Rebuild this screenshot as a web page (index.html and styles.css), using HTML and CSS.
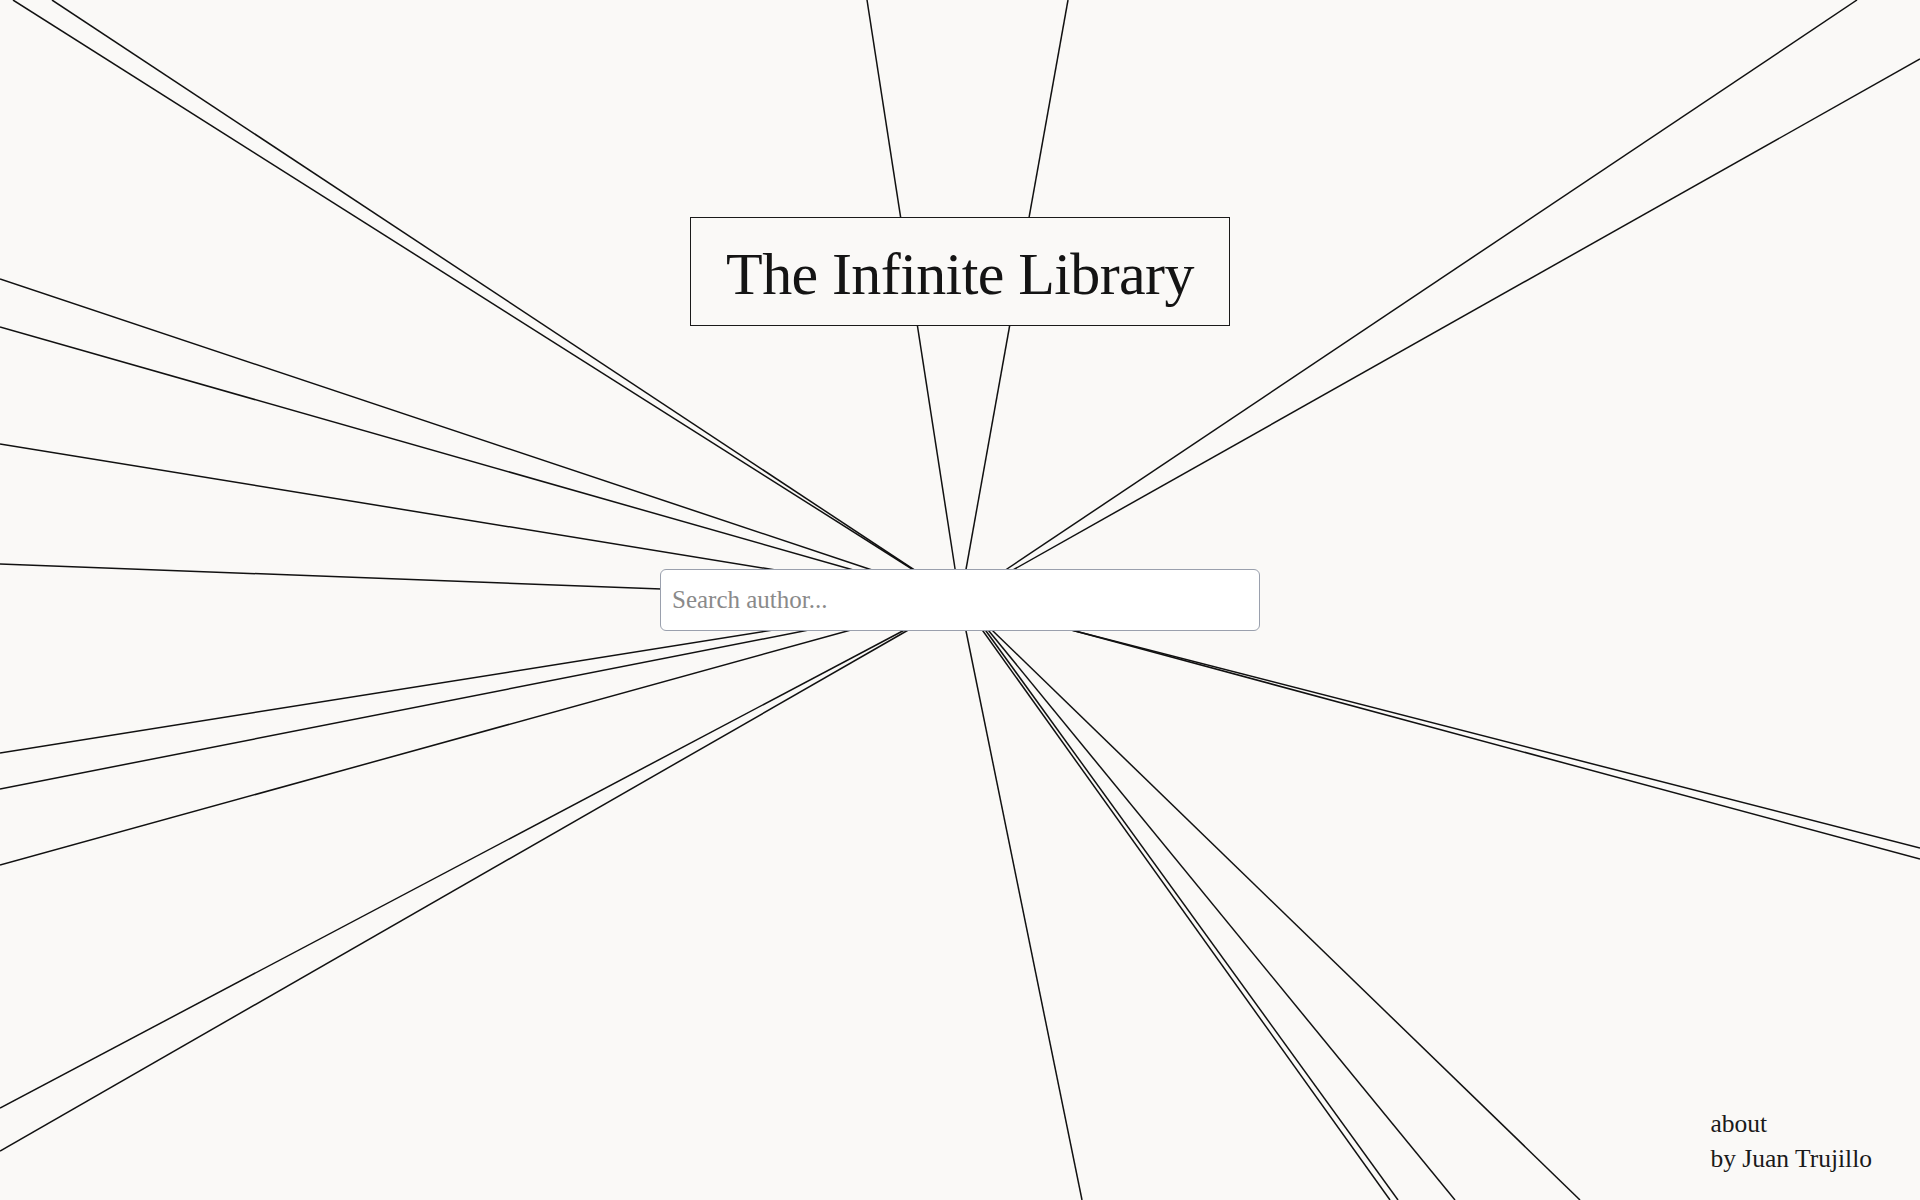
FILE: index.html
```html
<!DOCTYPE html>
<html lang="en">
<head>
<meta charset="utf-8">
<title>The Infinite Library</title>
<link rel="stylesheet" href="styles.css">
</head>
<body>
<svg class="web" viewBox="0 0 1920 1200" preserveAspectRatio="none" aria-hidden="true">
  <g class="links">
    <line x1="13" y1="0" x2="921.5" y2="575"/>
    <line x1="52" y1="0" x2="922" y2="575"/>
    <line x1="0" y1="279" x2="887" y2="575"/>
    <line x1="0" y1="327" x2="871" y2="575"/>
    <line x1="0" y1="444" x2="806" y2="575"/>
    <line x1="0" y1="564" x2="668" y2="589.3"/>
    <line x1="867" y1="0" x2="956" y2="575"/>
    <line x1="1068" y1="0" x2="965" y2="575"/>
    <line x1="1857" y1="0" x2="998" y2="575"/>
    <line x1="1920" y1="59" x2="1004" y2="575"/>
    <line x1="0" y1="753" x2="805" y2="625"/>
    <line x1="0" y1="789" x2="834" y2="625"/>
    <line x1="0" y1="865" x2="869" y2="625"/>
    <line x1="0" y1="1108" x2="914" y2="625"/>
    <line x1="0" y1="1151" x2="917" y2="625"/>
    <line x1="964.8" y1="625" x2="1082" y2="1200"/>
    <line x1="978.7" y1="625" x2="1390" y2="1200"/>
    <line x1="981.7" y1="625" x2="1398" y2="1200"/>
    <line x1="984" y1="625" x2="1455" y2="1200"/>
    <line x1="986.8" y1="625" x2="1580" y2="1200"/>
    <line x1="1051.6" y1="625" x2="1920" y2="848"/>
    <line x1="1052.8" y1="625" x2="1920" y2="859"/>
  </g>
</svg>
<div class="page">
  <main class="center">
    <h1 class="title">The Infinite Library</h1>
    <input class="search" type="text" placeholder="Search author...">
  </main>
  <footer class="credits">
    <a class="credit-link" href="#">about</a>
    <span class="credit-text">by Juan Trujillo</span>
  </footer>
</div>
</body>
</html>
```
FILE: styles.css
```css
html, body {
  margin: 0;
  padding: 0;
  height: 100%;
}

body {
  background: #faf9f7;
  color: #1a1a1a;
  font-family: "Liberation Serif", "Times New Roman", serif;
  overflow: hidden;
  position: relative;
}

.web {
  position: absolute;
  top: 0;
  left: 0;
  width: 1920px;
  height: 1200px;
  z-index: 0;
}

.links line {
  stroke: #111111;
  stroke-width: 1.5;
}

.page {
  position: relative;
  z-index: 1;
  height: 100%;
  display: flex;
  flex-direction: column;
}

.center {
  flex: 1;
  display: flex;
  flex-direction: column;
  align-items: center;
  padding-top: 217px;
}

.title {
  margin: 0;
  box-sizing: border-box;
  width: 540px;
  height: 109px;
  border: 1px solid #1a1a1a;
  background: #faf9f7;
  display: flex;
  align-items: center;
  justify-content: center;
  padding-top: 5px;
  font-weight: 400;
  font-size: 60px;
  letter-spacing: -0.6px;
  color: #141414;
}

.search {
  margin-top: 243px;
  box-sizing: border-box;
  width: 600px;
  height: 62px;
  border: 1px solid #9aa0ad;
  border-radius: 6px;
  background: #ffffff;
  padding: 0 11px;
  font-family: "Liberation Serif", "Times New Roman", serif;
  font-size: 25px;
  color: #1a1a1a;
  outline: none;
}

.search::placeholder {
  color: #8a8a8a;
}

.credits {
  align-self: flex-end;
  display: flex;
  flex-direction: column;
  padding: 0 48px 24px 0;
  font-size: 25.5px;
  line-height: 35px;
}

.credit-link {
  color: #1a1a1a;
  text-decoration: none;
}

.credit-text {
  color: #1a1a1a;
}
```
